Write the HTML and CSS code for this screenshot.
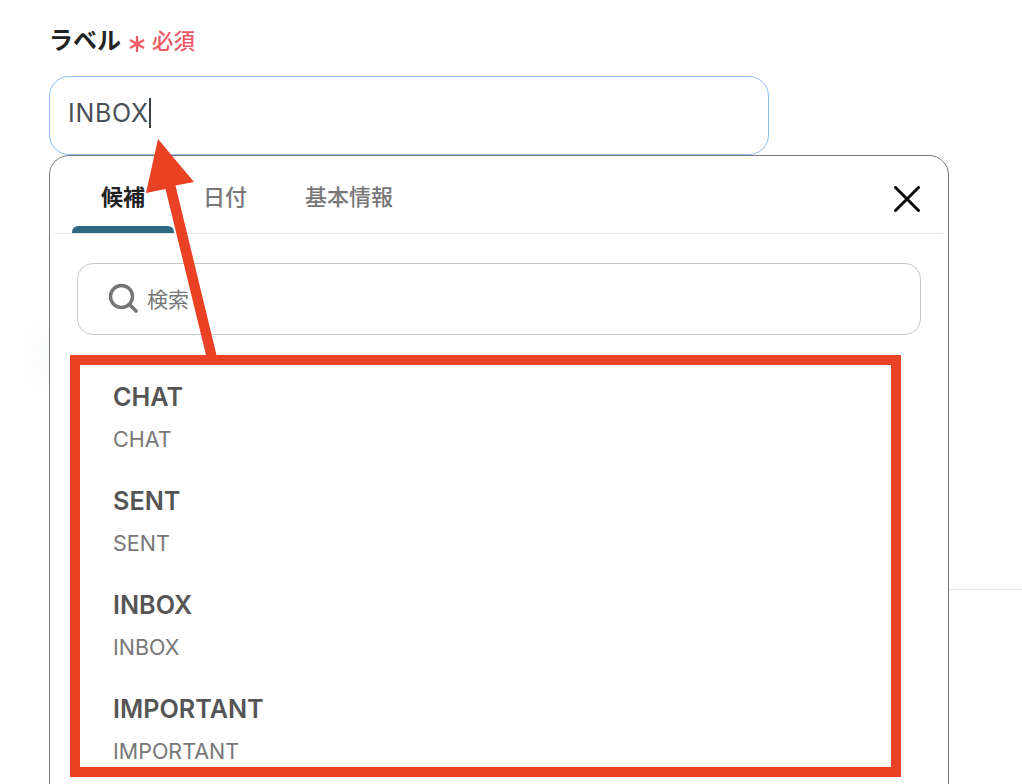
FILE: index.html
```html
<!DOCTYPE html>
<html lang="ja">
<head>
<meta charset="utf-8">
<title>ラベル</title>
<link rel="stylesheet" href="styles.css">
</head>
<body>
<main class="page">
  <div class="side-rule"></div>
  <div class="side-glow"></div>
  <div class="label-row">
    <span class="label">ラベル</span>
    <svg class="star" viewBox="0 0 16 16" width="16" height="16"><path d="M8 0V16M1 4 15 12M15 4 1 12" fill="none" stroke="#ee5a66" stroke-width="2.4"/></svg>
    <span class="required">必須</span>
  </div>
  <div class="input"><span class="input-text">INBOX</span><span class="caret"></span></div>
  <section class="popup">
    <div class="tabs">
      <div class="tab tab-active">候補</div>
      <div class="tab tab-date">日付</div>
      <div class="tab tab-info">基本情報</div>
      <svg class="close" viewBox="0 0 26 26" width="26" height="26"><path d="M1.500 1.500 24.500 24.500M24.500 1.500 1.500 24.500" fill="none" stroke="#0a0a0a" stroke-width="3" stroke-linecap="round"/></svg>
    </div>
    <div class="search">
      <svg class="search-icon" viewBox="0 0 30 30" width="30" height="30"><circle cx="13.500" cy="13.500" r="11" fill="none" stroke="#757575" stroke-width="3.400"/><path d="M21.500 21.500 28 28" fill="none" stroke="#757575" stroke-width="3.600" stroke-linecap="round"/></svg>
      <span class="search-text">検索</span>
    </div>
    <ul class="list">
      <li class="item"><div class="item-title">CHAT</div><div class="item-sub">CHAT</div></li>
      <li class="item"><div class="item-title">SENT</div><div class="item-sub">SENT</div></li>
      <li class="item"><div class="item-title">INBOX</div><div class="item-sub">INBOX</div></li>
      <li class="item"><div class="item-title">IMPORTANT</div><div class="item-sub">IMPORTANT</div></li>
    </ul>
  </section>
  <div class="highlight"></div>
  <svg class="arrow" viewBox="0 0 1022 784" width="1022" height="784"><path d="M158 139 194 182 175.500 185.500 216.500 355 206 355 165.500 189 146 193Z" fill="#ea4023"/></svg>
</main>
</body>
</html>
```
FILE: styles.css
```css
* { box-sizing: border-box; }
html, body { margin: 0; height: 100%; background: #fff; overflow: hidden; }
body { font-family: Inter, "Noto Sans CJK JP", sans-serif; }
.page { position: relative; width: 1022px; height: 784px; overflow: hidden; padding: 24px 0 0 49px; }
.side-rule { position: absolute; left: 949px; top: 589px; width: 73px; height: 1px; background: #e6e6e6; }
.side-glow { position: absolute; left: 28px; top: 320px; width: 40px; height: 70px; border-radius: 50%; background: #fafbfb; filter: blur(12px); }
.label-row { display: flex; align-items: center; height: 34px; }
.label { flex: none; width: 71px; font-size: 24px; font-weight: 700; color: #222; line-height: 34px; white-space: nowrap; }
.star { flex: none; margin: 6px 0 0 9px; }
.required { margin-left: 7px; color: #ee5a66; font-size: 21.500px; font-weight: 500; line-height: 34px; }
.input { display: flex; align-items: center; width: 720px; height: 79px; margin-top: 18px; padding: 0 18px 5px; border: 1px solid #8fbdf5; border-radius: 20px; background: #fff; }
.input-text { font-size: 25px; color: #4a5058; letter-spacing: 0.7px; }
.caret { width: 2px; height: 30px; background: #3b424b; }
.popup { position: relative; width: 900px; height: 700px; border: 1px solid #777; border-radius: 20px; background: #fff; padding: 0 5px; }
.tabs { position: relative; display: flex; height: 78px; border-bottom: 1px solid #e5e5e5; }
.tab { font-size: 22px; font-weight: 500; color: #777; line-height: 30px; padding-top: 26px; }
.tab-active { position: relative; width: 102px; margin-left: 17px; text-align: center; color: #222; font-weight: 700; }
.tab-active::after { content: ""; position: absolute; left: 0; right: 0; bottom: 0; height: 7px; background: #2d6a82; border-radius: 6px 6px 0 0; }
.tab-date { margin-left: 29px; }
.tab-info { margin-left: 58px; }
.close { position: absolute; right: 23px; top: 30px; }
.search { display: flex; align-items: center; height: 72px; margin: 29px 22px 0; padding: 0 0 2px 30px; border: 1px solid #c8c8c8; border-radius: 16px; }
.search-icon { flex: none; }
.search-text { margin-left: 9px; font-size: 21px; color: #777; }
.list { list-style: none; margin: 0; padding: 42px 0 0 58px; }
.item { height: 104px; }
.item-title { font-size: 25.200px; font-weight: 600; line-height: 40px; color: #555; }
.item-sub { margin-top: 2px; font-size: 21.500px; line-height: 40px; color: #777; }
.highlight { position: absolute; left: 70px; top: 355px; width: 831px; height: 422px; border: 10px solid #ea4023; }
.arrow { position: absolute; left: 0; top: 0; }
```
